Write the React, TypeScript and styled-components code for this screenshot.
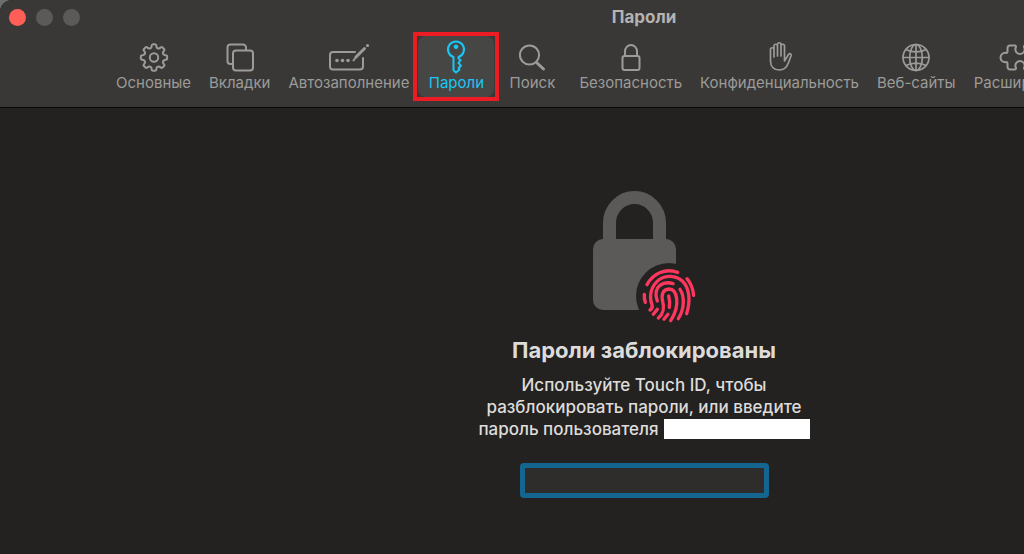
import React from "react";
import styled, { createGlobalStyle } from "styled-components";

const GlobalStyle = createGlobalStyle`
  *, *::before, *::after { box-sizing: border-box; }
  body {
    margin: 0;
    background: #232220;
    font-family: Inter, "Liberation Sans", sans-serif;
    overflow-x: hidden;
  }
`;

const Screen = styled.div`
  min-height: 100vh;
  overflow: hidden;
  background: #6d6e70;
`;

const Window = styled.div`
  width: calc(100% + 264px);
  min-height: 100vh;
  border-top-left-radius: 12px;
  overflow: hidden;
  background: #232220;
`;

const Header = styled.header`
  background: #393836;
  border-bottom: 1px solid #080808;
  padding-bottom: 10px;
`;

const TitleBar = styled.div`
  display: grid;
  grid-template-columns: 1fr auto 1fr;
  align-items: center;
  height: 34px;
  padding: 0 9px;
`;

const Lights = styled.div`
  display: flex;
  gap: 10px;
`;

const Light = styled.button<{ $color: string }>`
  width: 17px;
  height: 17px;
  padding: 0;
  border: 0;
  border-radius: 50%;
  background: ${(p) => p.$color};
`;

const Title = styled.h1`
  margin: 0;
  font-size: 17px;
  line-height: 24px;
  font-weight: 700;
  color: #b4b3b1;
`;

const Tabs = styled.nav`
  display: flex;
  padding: 2px 0 0 107px;
`;

const Tab = styled.button<{ $active?: boolean }>`
  position: relative;
  flex: none;
  display: flex;
  flex-direction: column;
  align-items: center;
  min-width: 76px;
  height: 61px;
  padding: 5px 9px;
  border: 0;
  border-radius: 8px;
  background: ${(p) => (p.$active ? "#464644" : "transparent")};
  color: ${(p) => (p.$active ? "#1ac6f5" : "#9c9b99")};
  font: 400 15px/20px Inter, "Liberation Sans", sans-serif;
  white-space: nowrap;
`;

const Highlight = styled.span`
  position: absolute;
  inset: -4px -5px;
  border: 4px solid #ec1c24;
`;

const Icon = styled.svg`
  display: block;
  width: 44px;
  height: 32px;
  fill: none;
  stroke: currentColor;
  stroke-width: 2;
  stroke-linecap: round;
  stroke-linejoin: round;
`;

const Content = styled.main`
  display: flex;
  flex-direction: column;
  align-items: center;
  padding-top: 80px;
  text-align: center;
  color: #dddcdb;
`;

const LockArt = styled.svg`
  display: block;
  width: 108px;
  height: 138px;
`;

const Heading = styled.h2`
  margin: 9px 0 0;
  font-size: 22px;
  line-height: 30px;
  font-weight: 700;
`;

const Message = styled.p`
  margin: 9px 0 0;
  font-size: 17px;
  line-height: 22px;
  font-weight: 500;
`;

const Line = styled.span`
  display: flex;
  justify-content: center;
  align-items: center;
  gap: 5px;
`;

const HiddenName = styled.span`
  width: 146px;
  height: 20px;
  background: #fff;
`;

const PasswordInput = styled.input`
  width: 249px;
  height: 35px;
  margin-top: 23px;
  padding: 0 8px;
  border: 5px solid #14658f;
  border-radius: 4px;
  outline: 0;
  background: #2f2d2b;
  color: #dddcdb;
  font: 17px Inter, "Liberation Sans", sans-serif;
`;

const gearPath = (() => {
  const at = (r: number, deg: number) => {
    const a = (deg * Math.PI) / 180;
    return `${(22 + r * Math.sin(a)).toFixed(2)} ${(16.5 - r * Math.cos(a)).toFixed(2)}`;
  };
  let d = `M${at(10.6, -14)}`;
  for (let i = 0; i < 8; i++) {
    const c = i * 45;
    d += `L${at(12.2, c - 11)}Q${at(13.2, c - 10)} ${at(13.2, c - 6)}L${at(13.2, c + 6)}Q${at(13.2, c + 10)} ${at(12.2, c + 11)}L${at(10.6, c + 14)}Q${at(9.2, c + 22.5)} ${at(10.6, c + 31)}`;
  }
  return d + "Z";
})();

const icons = {
  gear: (
    <>
      <path d={gearPath} />
      <circle cx="22" cy="16.5" r="4.2" />
    </>
  ),
  tabs: (
    <>
      <path d="M15 23h-2.500a3 3 0 0 1-3-3V6.500a3 3 0 0 1 3-3H25a3 3 0 0 1 3 3V9" />
      <rect x="15" y="9.500" width="20" height="20" rx="3" />
    </>
  ),
  autofill: (
    <>
      <path d="M28 11H6a3 3 0 0 0-3 3v11.500a3 3 0 0 0 3 3h27a3 3 0 0 0 3-3V17" />
      <path d="M37.500 7.500 29 16" strokeWidth="3" />
      <path d="M29 16 26.500 19.500" />
      <circle cx="40.500" cy="4.500" r="1.600" fill="currentColor" stroke="none" />
      <g fill="currentColor" stroke="none">
        <circle cx="10" cy="19.500" r="1.800" />
        <circle cx="15.500" cy="19.500" r="1.800" />
        <circle cx="21" cy="19.500" r="1.800" />
      </g>
    </>
  ),
  key: (
    <>
      <path d="M19.500 16a8 8 0 1 1 5 0v1.500l2.200 1.700-2.200 2.600 2.500 3-2.400 2.200.9 1.500L22 31.500l-2.500-2.300Z" />
      <circle cx="22" cy="5.800" r="2.300" fill="currentColor" stroke="none" />
    </>
  ),
  search: (
    <>
      <circle cx="19.500" cy="14" r="9.600" />
      <path d="M26.500 21.500 33.500 28" strokeWidth="3" />
    </>
  ),
  lock: (
    <>
      <rect x="13.500" y="15" width="17" height="14" rx="2" />
      <path d="M16 15v-4.500a6 6.500 0 0 1 12 0V15" />
    </>
  ),
  hand: (
    <path
      strokeWidth="1.700"
      d="M12.500 20V8.500a1.700 1.700 0 0 1 3.500 0V16V5a1.700 1.700 0 0 1 3.500 0v10V3.500a1.700 1.700 0 0 1 3.500 0V15V5a1.700 1.700 0 0 1 3.500 0v15l4-6.500c1.200-1.500 3-.8 2.600 1.200l-3 7.800c-1.500 3.900-4.300 6.500-8.600 6.500-5.500 0-9-3.500-9-9Z"
    />
  ),
  globe: (
    <g strokeWidth="1.700">
      <circle cx="22" cy="16.500" r="13" />
      <ellipse cx="22" cy="16.500" rx="6.300" ry="13" />
      <path d="M22 3.500v26M9 16.500h26M12 8.500c6 3.200 14 3.200 20 0M12 24.500c6-3.200 14-3.200 20 0" />
    </g>
  ),
  puzzle: (
    <path d="M9.500 7a2.500 2.500 0 0 1 2.500-2.500h4.500c1.500 0 1.800 1 1.200 2.200a4.600 4.600 0 1 0 8.600 0c-.6-1.200-.3-2.200 1.200-2.200H32a2.500 2.500 0 0 1 2.500 2.500v3.500c0 1.500 1 1.800 2.200 1.200a4.300 4.300 0 1 1 0 9.600c-1.200-.6-2.200-.3-2.200 1.200V26a2.500 2.500 0 0 1-2.500 2.500h-4.500c-1.500 0-1.800-1-1.200-2.200a4.600 4.600 0 1 0-8.600 0c.6 1.200.3 2.200-1.200 2.200H12A2.500 2.500 0 0 1 9.500 26v-3.500c0-1.500-1-1.800-2.200-1.200a4.800 4.800 0 1 1 0-9.600c1.200.6 2.200.3 2.200-1.200Z" />
  ),
};

const tabs: { label: string; icon: keyof typeof icons; active?: boolean }[] = [
  { label: "Основные", icon: "gear" },
  { label: "Вкладки", icon: "tabs" },
  { label: "Автозаполнение", icon: "autofill" },
  { label: "Пароли", icon: "key", active: true },
  { label: "Поиск", icon: "search" },
  { label: "Безопасность", icon: "lock" },
  { label: "Конфиденциальность", icon: "hand" },
  { label: "Веб-сайты", icon: "globe" },
  { label: "Расширения", icon: "puzzle" },
];

export default function App() {
  return (
    <Screen>
      <GlobalStyle />
      <Window>
        <Header>
          <TitleBar>
            <Lights>
              <Light $color="#ff5f57" aria-label="Закрыть" />
              <Light $color="#5b5a58" aria-label="Свернуть" />
              <Light $color="#5b5a58" aria-label="Развернуть" />
            </Lights>
            <Title>Пароли</Title>
          </TitleBar>
          <Tabs>
            {tabs.map((t) => (
              <Tab key={t.label} $active={t.active}>
                <Icon viewBox="0 0 44 32" overflow="visible" aria-hidden="true">
                  {icons[t.icon]}
                </Icon>
                {t.label}
                {t.active && <Highlight />}
              </Tab>
            ))}
          </Tabs>
        </Header>
        <Content>
          <LockArt viewBox="0 0 108 138" aria-hidden="true">
            <path d="M19.500 56V35a25 25.500 0 0 1 50 0v21" fill="none" stroke="#5b5a58" strokeWidth="13" />
            <rect x="3" y="51" width="83" height="71" rx="10" fill="#5b5a58" />
            <circle cx="79" cy="108" r="33" fill="#232220" />
            <g
              transform="translate(-20 -8) scale(.3333)"
              fill="none"
              stroke="#ff375f"
              strokeWidth="10"
              strokeLinecap="round"
              strokeLinejoin="round"
            >
              <path d="M231 314C250 279 287 264 323 277" />
              <path d="M351 296Q368 316 371 346" />
              <path d="M223 343Q222 356 226 367" />
              <path d="M240 390Q249 385 246 374C236 346 244 318 266 300C288 284 318 286 337 303C359 324 362 362 350 401" />
              <path d="M262 363C254 342 258 326 270 316Q286 304 309 311" />
              <path d="M330 328C345 350 343 388 325 416" />
              <path d="M250 403L262 388" />
              <path d="M265 414C281 400 284 386 278 364C273 342 280 328 297 327C312 327 318 340 320 356C323 380 316 401 302 422" />
              <path d="M296 348Q301 366 298 382" />
              <path d="M282 418L294 403" />
            </g>
          </LockArt>
          <Heading>Пароли заблокированы</Heading>
          <Message id="hint">
            <Line>Используйте Touch ID, чтобы</Line>
            <Line>разблокировать пароли, или введите</Line>
            <Line>
              пароль пользователя <HiddenName />
            </Line>
          </Message>
          <PasswordInput type="password" aria-labelledby="hint" />
        </Content>
      </Window>
    </Screen>
  );
}
